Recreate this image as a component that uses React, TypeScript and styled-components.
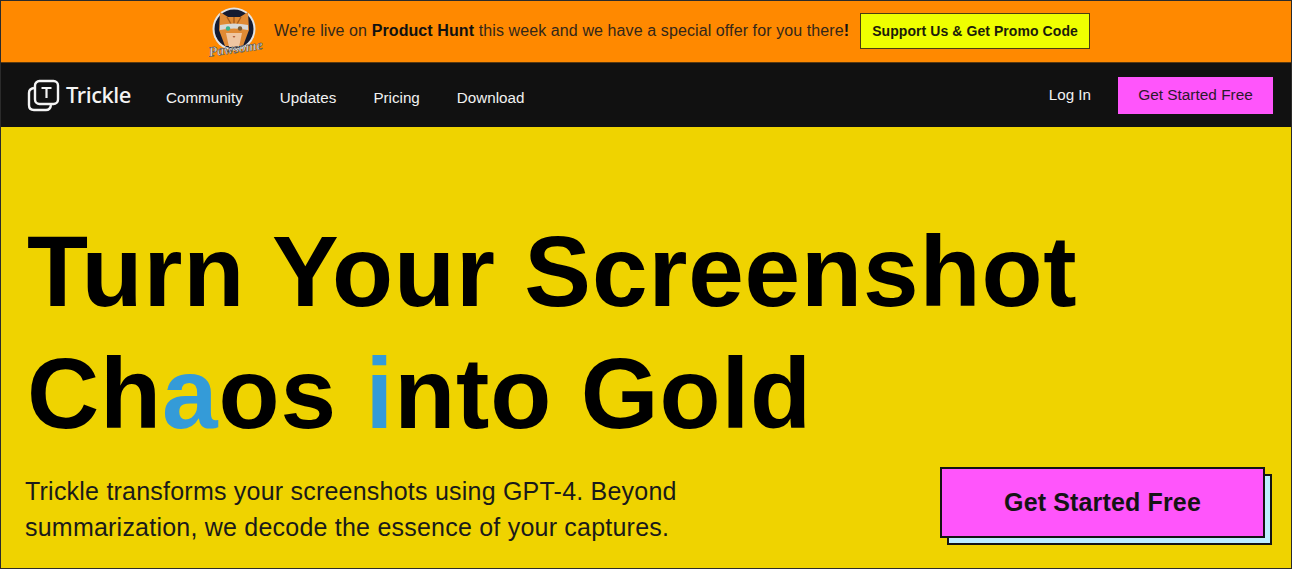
import React from 'react';
import styled, { createGlobalStyle } from 'styled-components';

const GlobalStyle = createGlobalStyle`
  html, body {
    margin: 0;
    padding: 0;
    background: #efd300;
    font-family: "Liberation Sans", Arial, sans-serif;
  }
`;

const Page = styled.div`
  width: 1292px;
  height: 569px;
  box-sizing: border-box;
  border: 1px solid #2b2b2b;
  display: flex;
  flex-direction: column;
  overflow: hidden;
`;

const Banner = styled.div`
  height: 62px;
  flex: none;
  box-sizing: border-box;
  background: #ff8900;
  border-bottom: 1px solid #5a3a10;
  display: flex;
  align-items: center;
  justify-content: center;
  padding: 0 0 2px 6px;
`;

const BannerLogo = styled.svg`
  width: 58px;
  height: 56px;
  margin-right: 8px;
  flex: none;
`;

const BannerText = styled.span`
  font-size: 16px;
  letter-spacing: 0.1px;
  color: #33271a;
  margin-right: 11px;

  b {
    color: #111;
  }
`;

const PromoButton = styled.a`
  height: 34px;
  padding: 0 11px;
  display: flex;
  align-items: center;
  background: #efff00;
  border: 1px solid #4a3c10;
  color: #1c1c0a;
  font-size: 14px;
  font-weight: 700;
  letter-spacing: 0.07px;
`;

const Nav = styled.nav`
  height: 64px;
  flex: none;
  background: #111111;
  display: flex;
  align-items: center;
  padding: 0 18px 0 26px;
`;

const Brand = styled.div`
  display: flex;
  align-items: center;
  gap: 6px;
  width: 139px;
  flex: none;
`;

const BrandName = styled.span`
  font-family: "Noto Sans", sans-serif;
  font-size: 22px;
  font-weight: 500;
  color: #f4f4f4;
  letter-spacing: -0.45px;
  padding-bottom: 2px;
`;

const NavLinks = styled.div`
  display: flex;
  gap: 37px;
  padding-top: 4px;
`;

const NavLink = styled.a`
  color: #f2f2f2;
  font-size: 15.2px;
`;

const NavRight = styled.div`
  margin-left: auto;
  display: flex;
  align-items: center;
  gap: 27px;
`;

const LogIn = styled.a`
  color: #f2f2f2;
  font-size: 15.2px;
  padding-bottom: 2px;
`;

const NavCta = styled.a`
  width: 155px;
  height: 37px;
  display: flex;
  align-items: center;
  justify-content: center;
  background: #ff55fb;
  color: #2c1a2c;
  font-size: 15.4px;
`;

const Hero = styled.main`
  flex: 1;
  background: #efd300;
  padding: 83px 18px 0 24px;
  display: flex;
  flex-direction: column;
`;

const Headline = styled.h1`
  margin: 0 0 0 2px;
  font-size: 100px;
  line-height: 122px;
  font-weight: 700;
  color: #000;
  letter-spacing: 0.85px;
`;

const Accent = styled.span`
  color: #349bd8;
`;

const HeroBottom = styled.div`
  display: flex;
  justify-content: space-between;
  align-items: flex-start;
  margin-top: 6px;
`;

const Lead = styled.p`
  margin: 13px 0 0;
  font-size: 25px;
  line-height: 36px;
  letter-spacing: 0.22px;
  color: #1a1a1a;
`;

const CtaWrap = styled.div`
  position: relative;
  width: 325px;
  height: 71px;
  margin: 7px 8px 0 0;
`;

const CtaShadow = styled.div`
  position: absolute;
  left: 7px;
  top: 7px;
  width: 100%;
  height: 100%;
  box-sizing: border-box;
  background: #bdeeff;
  border: 2px solid #141414;
`;

const CtaButton = styled.a`
  position: absolute;
  inset: 0;
  display: flex;
  align-items: center;
  justify-content: center;
  box-sizing: border-box;
  background: #ff55fb;
  border: 2px solid #141414;
  color: #141414;
  font-size: 25px;
  font-weight: 700;
  letter-spacing: 0.15px;
`;

function CatLogo() {
  return (
    <BannerLogo viewBox="0 0 58 56">
      <circle cx="26" cy="26" r="21.5" fill="#e4e4e4" />
      <circle cx="26" cy="26" r="19.5" fill="#141a30" />
      <path d="M12 9 L20 14 L32 14 L40 9 L41 27 L35 43 L17 43 L11 27 Z" fill="#e08a34" />
      <path d="M19 14 L23 21 M33 14 L29 21 M26 14 V21" stroke="#a85c1c" strokeWidth="1.4" />
      <path d="M12 22 Q26 19 40 22 V27 Q26 24 12 27 Z" fill="#d8d8d8" />
      <circle cx="20" cy="25.5" r="2.2" fill="#3ab38f" />
      <circle cx="32" cy="25.5" r="2.2" fill="#7a5a30" />
      <path d="M18 30 H34 L31 44 H21 Z" fill="#efc6a2" />
      <path d="M24.5 33 H27.5 L26 35 Z" fill="#b5603c" />
      <text
        x="28"
        y="50"
        textAnchor="middle"
        fontFamily='"Liberation Serif", serif'
        fontStyle="italic"
        fontWeight="700"
        fontSize="14"
        fill="#d9d9d9"
        stroke="#4a4a4a"
        strokeWidth="0.5"
        transform="rotate(-8 28 48)"
      >
        Pawsome
      </text>
    </BannerLogo>
  );
}

function TrickleMark() {
  return (
    <svg width="33" height="33" viewBox="0 0 33 33" fill="none" stroke="#f4f4f4" strokeWidth="2.4">
      <path d="M7 9 C3.5 9.5 2 11.5 2 14 V26 C2 29 4 31 7 31 H19 C21.5 31 23.5 29.5 24 26" />
      <rect x="8" y="2" width="23" height="23" rx="4.5" />
      <path d="M14.5 9 H24.5 M19.5 9 V19" strokeWidth="2.2" />
    </svg>
  );
}

export default function App() {
  return (
    <Page>
      <GlobalStyle />
      <Banner>
        <CatLogo />
        <BannerText>
          We're live on <b>Product Hunt</b> this week and we have a special offer for you there<b>!</b>
        </BannerText>
        <PromoButton>Support Us &amp; Get Promo Code</PromoButton>
      </Banner>
      <Nav>
        <Brand>
          <TrickleMark />
          <BrandName>Trickle</BrandName>
        </Brand>
        <NavLinks>
          <NavLink>Community</NavLink>
          <NavLink>Updates</NavLink>
          <NavLink>Pricing</NavLink>
          <NavLink>Download</NavLink>
        </NavLinks>
        <NavRight>
          <LogIn>Log In</LogIn>
          <NavCta>Get Started Free</NavCta>
        </NavRight>
      </Nav>
      <Hero>
        <Headline>
          Turn Your Screenshot
          <br />
          Ch<Accent>a</Accent>os <Accent>i</Accent>nto Gold
        </Headline>
        <HeroBottom>
          <Lead>
            Trickle transforms your screenshots using GPT-4. Beyond
            <br />
            summarization, we decode the essence of your captures.
          </Lead>
          <CtaWrap>
            <CtaShadow />
            <CtaButton>Get Started Free</CtaButton>
          </CtaWrap>
        </HeroBottom>
      </Hero>
    </Page>
  );
}
